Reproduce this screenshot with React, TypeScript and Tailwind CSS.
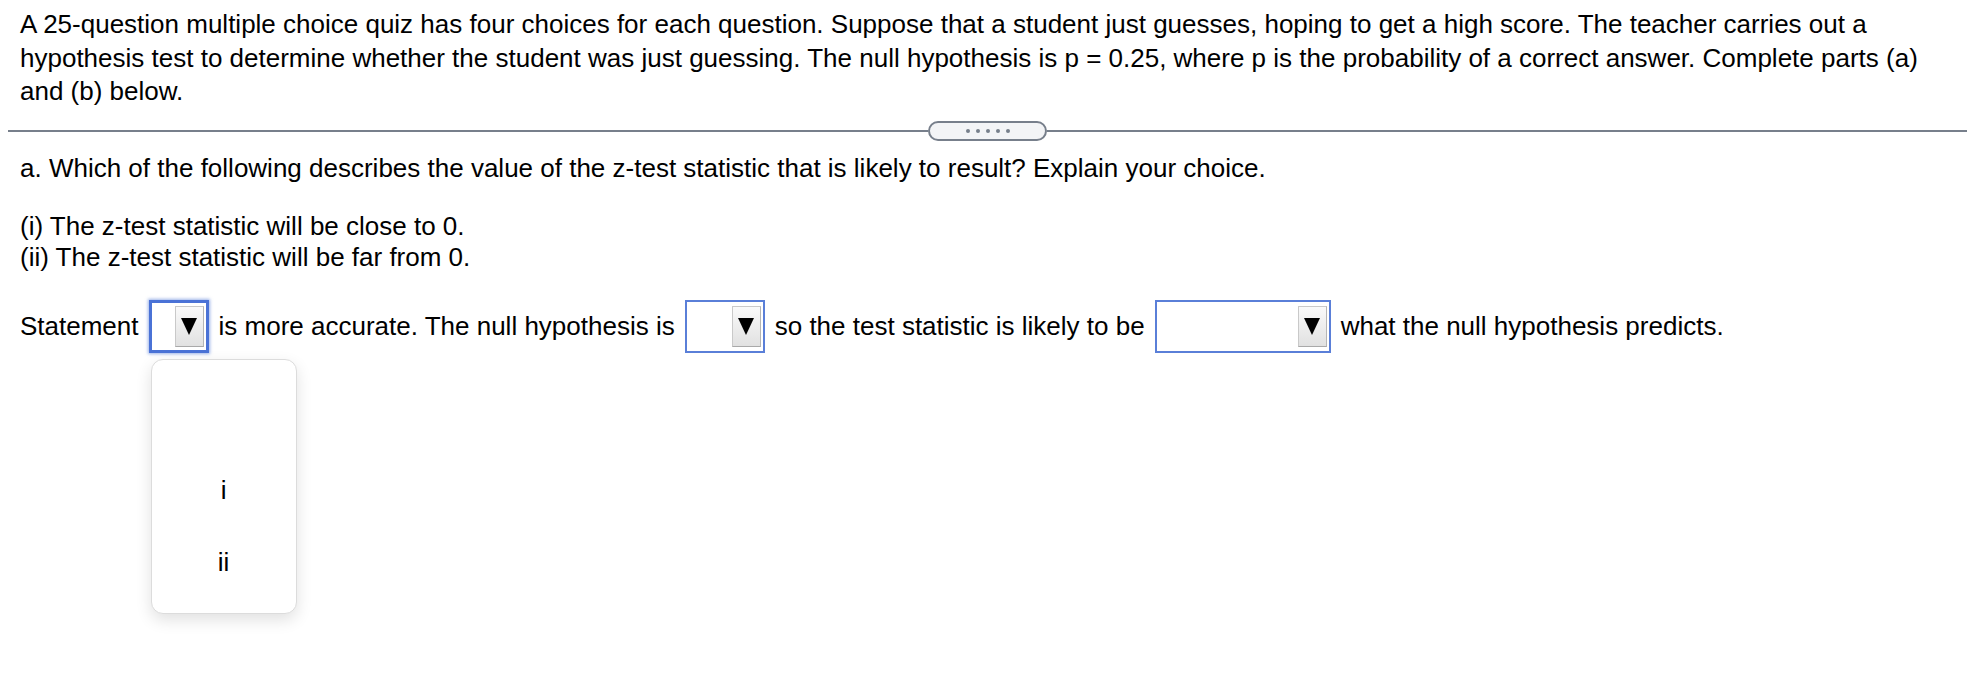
import React from "react";

function Select({ width, focused }: { width: string; focused?: boolean }) {
  return (
    <span
      className={`relative inline-flex h-[53px] items-center justify-end bg-white align-middle ${width} ${
        focused
          ? "border-[3px] border-[#4a72d6] shadow-[0_0_3px_1px_rgba(74,114,214,0.55)]"
          : "border-2 border-[#5a7fd8]"
      }`}
    >
      <span className="mr-[2px] flex h-[41px] w-[29px] items-center justify-center border border-[#c9c9c9] border-b-[#a9a9a9] border-r-[#b5b5b5] bg-gradient-to-b from-[#fafafa] to-[#e1e1e1]">
        <svg width="16" height="17" viewBox="0 0 16 17">
          <path d="M0 0 H16 L8 17 Z" fill="#000" />
        </svg>
      </span>
    </span>
  );
}

export default function App() {
  return (
    <div className="relative h-[678px] w-[1972px] overflow-hidden bg-white font-['Liberation_Sans',Arial,sans-serif] text-[26px] text-black">
      <p className="whitespace-nowrap pl-[20px] pt-[8px] leading-[33.5px]">
        A 25-question multiple choice quiz has four choices for each question. Suppose that a student just guesses, hoping to get a high score. The teacher carries out a
        <br />
        hypothesis test to determine whether the student was just guessing. The null hypothesis is p = 0.25, where p is the probability of a correct answer. Complete parts (a)
        <br />
        and (b) below.
      </p>

      <div className="mt-[12px] ml-[8px] mr-[5px] flex h-[20px] items-center">
        <div className="h-[2px] flex-1 bg-[#777f8b]" />
        <div className="flex h-[20px] w-[119px] items-center justify-center gap-[6px] rounded-full border-2 border-[#777f8b] bg-[#f3f4f6]">
          <span className="h-[4px] w-[4px] rounded-full bg-[#777f8b]" />
          <span className="h-[4px] w-[4px] rounded-full bg-[#777f8b]" />
          <span className="h-[4px] w-[4px] rounded-full bg-[#777f8b]" />
          <span className="h-[4px] w-[4px] rounded-full bg-[#777f8b]" />
          <span className="h-[4px] w-[4px] rounded-full bg-[#777f8b]" />
        </div>
        <div className="h-[2px] flex-1 bg-[#777f8b]" />
      </div>

      <p className="mt-[11px] pl-[20px] leading-[33.5px]">
        a. Which of the following describes the value of the z-test statistic that is likely to result? Explain your choice.
      </p>

      <div className="mt-[26px] pl-[20px] leading-[31px]">
        <p>(i) The z-test statistic will be close to 0.</p>
        <p>(ii) The z-test statistic will be far from 0.</p>
      </div>

      <div className="mt-[27px] flex items-center gap-[10px] pl-[20px] leading-[33.5px]">
        <span>Statement</span>
        <span className="relative">
          <Select width="w-[60px]" focused />
          <div className="absolute left-[2px] top-[59px] z-10 flex h-[255px] w-[146px] flex-col items-center rounded-[12px] border border-[#dcdcdc] bg-white shadow-[0_6px_16px_rgba(0,0,0,0.12)]">
            <span className="mt-[114px]">i</span>
            <span className="mt-[38px]">ii</span>
          </div>
        </span>
        <span>is more accurate. The null hypothesis is</span>
        <Select width="w-[80px]" />
        <span>so the test statistic is likely to be</span>
        <Select width="w-[176px]" />
        <span>what the null hypothesis predicts.</span>
      </div>
    </div>
  );
}
